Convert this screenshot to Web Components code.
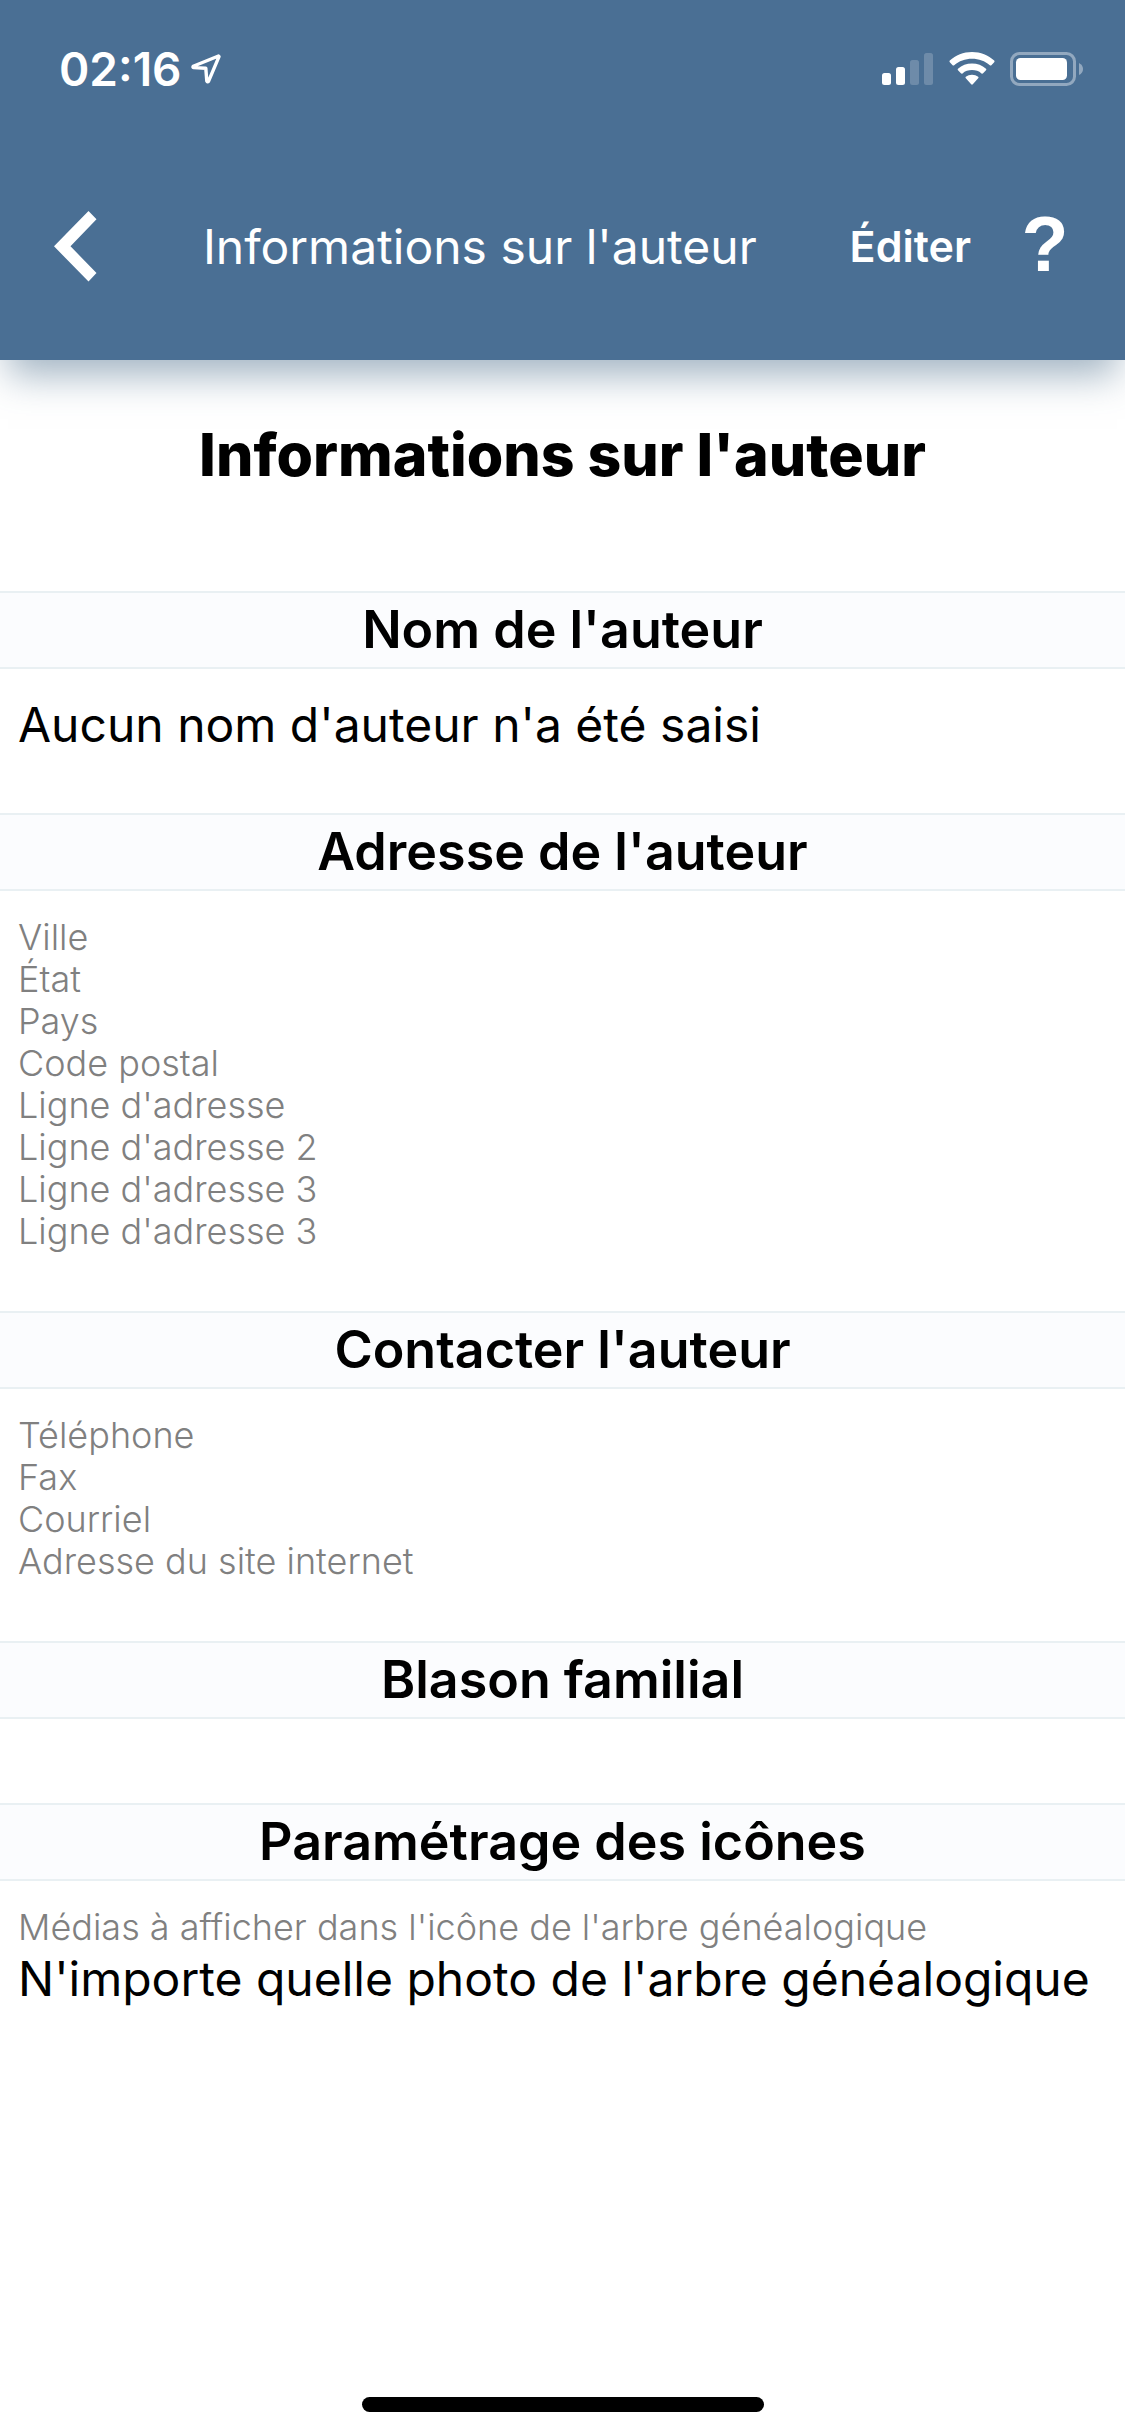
<!DOCTYPE html>
<html lang="fr">
<head>
<meta charset="utf-8">
<meta name="viewport" content="width=device-width, initial-scale=1">
<title>Informations sur l'auteur</title>
<style>
  html, body { margin: 0; }
  body { background: #fff; color: #000; font-family: Inter, "Liberation Sans", sans-serif; }
</style>
</head>
<body>
<author-page>
  <app-header slot="header">
    <status-bar slot="status">02:16</status-bar>
    <nav-bar slot="nav" action="Éditer" help="?">Informations sur l'auteur</nav-bar>
  </app-header>

  <span slot="title">Informations sur l'auteur</span>

  <info-section heading="Nom de l'auteur">
    <info-value>Aucun nom d'auteur n'a été saisi</info-value>
  </info-section>
  <info-section heading="Adresse de l'auteur">
    <info-label>Ville</info-label>
    <info-label>État</info-label>
    <info-label>Pays</info-label>
    <info-label>Code postal</info-label>
    <info-label>Ligne d'adresse</info-label>
    <info-label>Ligne d'adresse 2</info-label>
    <info-label>Ligne d'adresse 3</info-label>
    <info-label>Ligne d'adresse 3</info-label>
  </info-section>
  <info-section heading="Contacter l'auteur">
    <info-label>Téléphone</info-label>
    <info-label>Fax</info-label>
    <info-label>Courriel</info-label>
    <info-label>Adresse du site internet</info-label>
  </info-section>
  <info-section heading="Blason familial"></info-section>
  <info-section heading="Paramétrage des icônes">
    <info-label>Médias à afficher dans l'icône de l'arbre généalogique</info-label>
    <info-value>N'importe quelle photo de l'arbre généalogique</info-value>
  </info-section>

  <home-indicator slot="footer"></home-indicator>
</author-page>

<script>
  const define = (name, html, setup) => {
    const template = document.createElement('template');
    template.innerHTML = html;
    customElements.define(name, class extends HTMLElement {
      constructor() {
        super();
        this.attachShadow({ mode: 'open' }).append(template.content.cloneNode(true));
      }
      connectedCallback() {
        if (setup) setup(this, this.shadowRoot);
      }
    });
  };

  define('author-page', `
    <style>
      :host { display: flex; flex-direction: column; min-height: 100vh; }
      main { flex: 1; }
      h1 { margin: 0; padding: 59px 18px 100px; font-size: 59px; line-height: 72px; font-weight: 800; text-align: center; }
    </style>
    <slot name="header"></slot>
    <main>
      <h1><slot name="title"></slot></h1>
      <slot></slot>
    </main>
    <slot name="footer"></slot>
  `);

  define('app-header', `
    <style>
      :host { display: block; background: #4a6f94; color: #fff; box-shadow: 0 23px 36px -8px rgba(70, 105, 135, .5); }
    </style>
    <header>
      <slot name="status"></slot>
      <slot name="nav"></slot>
    </header>
  `);

  define('status-bar', `
    <style>
      :host { display: flex; align-items: center; height: 138px; padding: 0 41px 0 59px; box-sizing: border-box; }
      .time { font-size: 46px; line-height: 54px; font-weight: 600; }
      .location { margin-left: 9px; }
      .icons { display: flex; align-items: center; gap: 15px; margin-left: auto; }
      svg { display: block; }
    </style>
    <span class="time"><slot></slot></span>
    <svg class="location" width="30" height="30" viewBox="0 0 30 30" fill="none" stroke="#fff" stroke-width="3.400" stroke-linejoin="round" aria-hidden="true">
      <path d="M27.500 2 2.200 12.300Q1.600 13.400 2.600 13.600L14.800 14.200 15.800 27Q16.500 28.400 17.500 27.300L28 2.600Z"/>
    </svg>
    <div class="icons">
      <svg width="52" height="34" viewBox="0 0 52 34" fill="#fff" aria-hidden="true">
        <rect x="0" y="21" width="9" height="12" rx="2.5"/>
        <rect x="14" y="15" width="9" height="18" rx="2.5"/>
        <rect x="28" y="8" width="9" height="25" rx="2.5" opacity=".2"/>
        <rect x="42" y="1" width="9" height="32" rx="2.5" opacity=".2"/>
      </svg>
      <svg width="46" height="34" viewBox="0 0 46 34" fill="#fff" aria-hidden="true">
        <path d="M23 0C14.4 0 6.600 3.200.8 8.600Q0 9.400.8 10.200L3.600 13.200Q4.400 14 5.200 13.200C10 8.900 16.200 6.700 23 6.700S36 8.900 40.800 13.200Q41.600 14 42.400 13.200L45.200 10.200Q46 9.400 45.200 8.600C39.400 3.200 31.600 0 23 0Z"/>
        <path d="M23 11.500C17.600 11.500 12.800 13.400 9 16.700Q8.200 17.500 9 18.300L11.900 21.300Q12.700 22.100 13.500 21.400C16.100 19.200 19.400 18.100 23 18.100S29.900 19.200 32.500 21.400Q33.300 22.100 34.100 21.300L37 18.300Q37.800 17.500 37 16.700C33.200 13.400 28.400 11.500 23 11.500Z"/>
        <path d="M23 22.800C20.500 22.800 18.600 23.500 16.800 24.800Q16 25.500 16.800 26.300L22.200 32.300Q23 33.100 23.800 32.300L29.200 26.300Q30 25.500 29.200 24.800C27.400 23.500 25.500 22.800 23 22.800Z"/>
      </svg>
      <svg width="74" height="34" viewBox="0 0 74 34" aria-hidden="true">
        <rect x="1.500" y="1.500" width="63" height="31" rx="8" fill="none" stroke="#fff" stroke-width="3" opacity=".4"/>
        <rect x="6" y="6" width="51" height="22" rx="4.500" fill="#fff"/>
        <path d="M69 11Q73 13 73 17T69 23Z" fill="#fff" opacity=".4"/>
      </svg>
    </div>
  `);

  define('nav-bar', `
    <style>
      :host { display: flex; align-items: center; height: 222px; padding: 0 46px 6px 0; box-sizing: border-box; }
      button { margin: 0; border: 0; padding: 0; background: none; color: inherit; font-family: inherit; cursor: pointer; }
      .back { width: 150px; padding: 24px 54px; box-sizing: border-box; }
      .title { flex: 1; padding-top: 2px; text-align: center; font-size: 48px; line-height: 60px; font-weight: 400; white-space: nowrap; }
      .edit { padding: 16px 40px; font-size: 43px; line-height: 52px; font-weight: 600; }
      .help { width: 68px; padding-bottom: 4px; font: bold 77px/88px "Liberation Sans", sans-serif; }
      svg { display: block; }
    </style>
    <button class="back" type="button" aria-label="Retour">
      <svg width="43" height="71" viewBox="0 0 43 71" fill="#fff"><path d="M34.500 0 42.500 8.300 16.500 35.300 42.500 62 34.500 70.500 0 35.300Z"/></svg>
    </button>
    <span class="title"><slot></slot></span>
    <button class="edit" type="button"></button>
    <button class="help" type="button" aria-label="Aide"></button>
  `, (host, root) => {
    root.querySelector('.edit').textContent = host.getAttribute('action');
    root.querySelector('.help').textContent = host.getAttribute('help');
  });

  define('info-section', `
    <style>
      :host { display: block; }
      h2 { margin: 0; border: solid #e9f0f3; border-width: 2px 0; background: #fbfcfe; font-size: 52px; line-height: 74px; font-weight: 600; text-align: center; }
      .body { padding: 25px 18px 59px; }
    </style>
    <section>
      <h2></h2>
      <div class="body"><slot></slot></div>
    </section>
  `, (host, root) => {
    root.querySelector('h2').textContent = host.getAttribute('heading');
  });

  define('info-label', `
    <style>
      :host { display: block; color: #808080; font-size: 36px; line-height: 42px; font-weight: 300; }
    </style>
    <slot></slot>
  `);

  define('info-value', `
    <style>
      :host { display: block; padding-top: 2px; font-size: 48px; line-height: 58px; }
    </style>
    <slot></slot>
  `);

  define('home-indicator', `
    <style>
      :host { display: flex; justify-content: center; padding-bottom: 24px; }
      div { width: 402px; height: 15px; border-radius: 8px; background: #000; }
    </style>
    <div></div>
  `);
</script>
</body>
</html>
